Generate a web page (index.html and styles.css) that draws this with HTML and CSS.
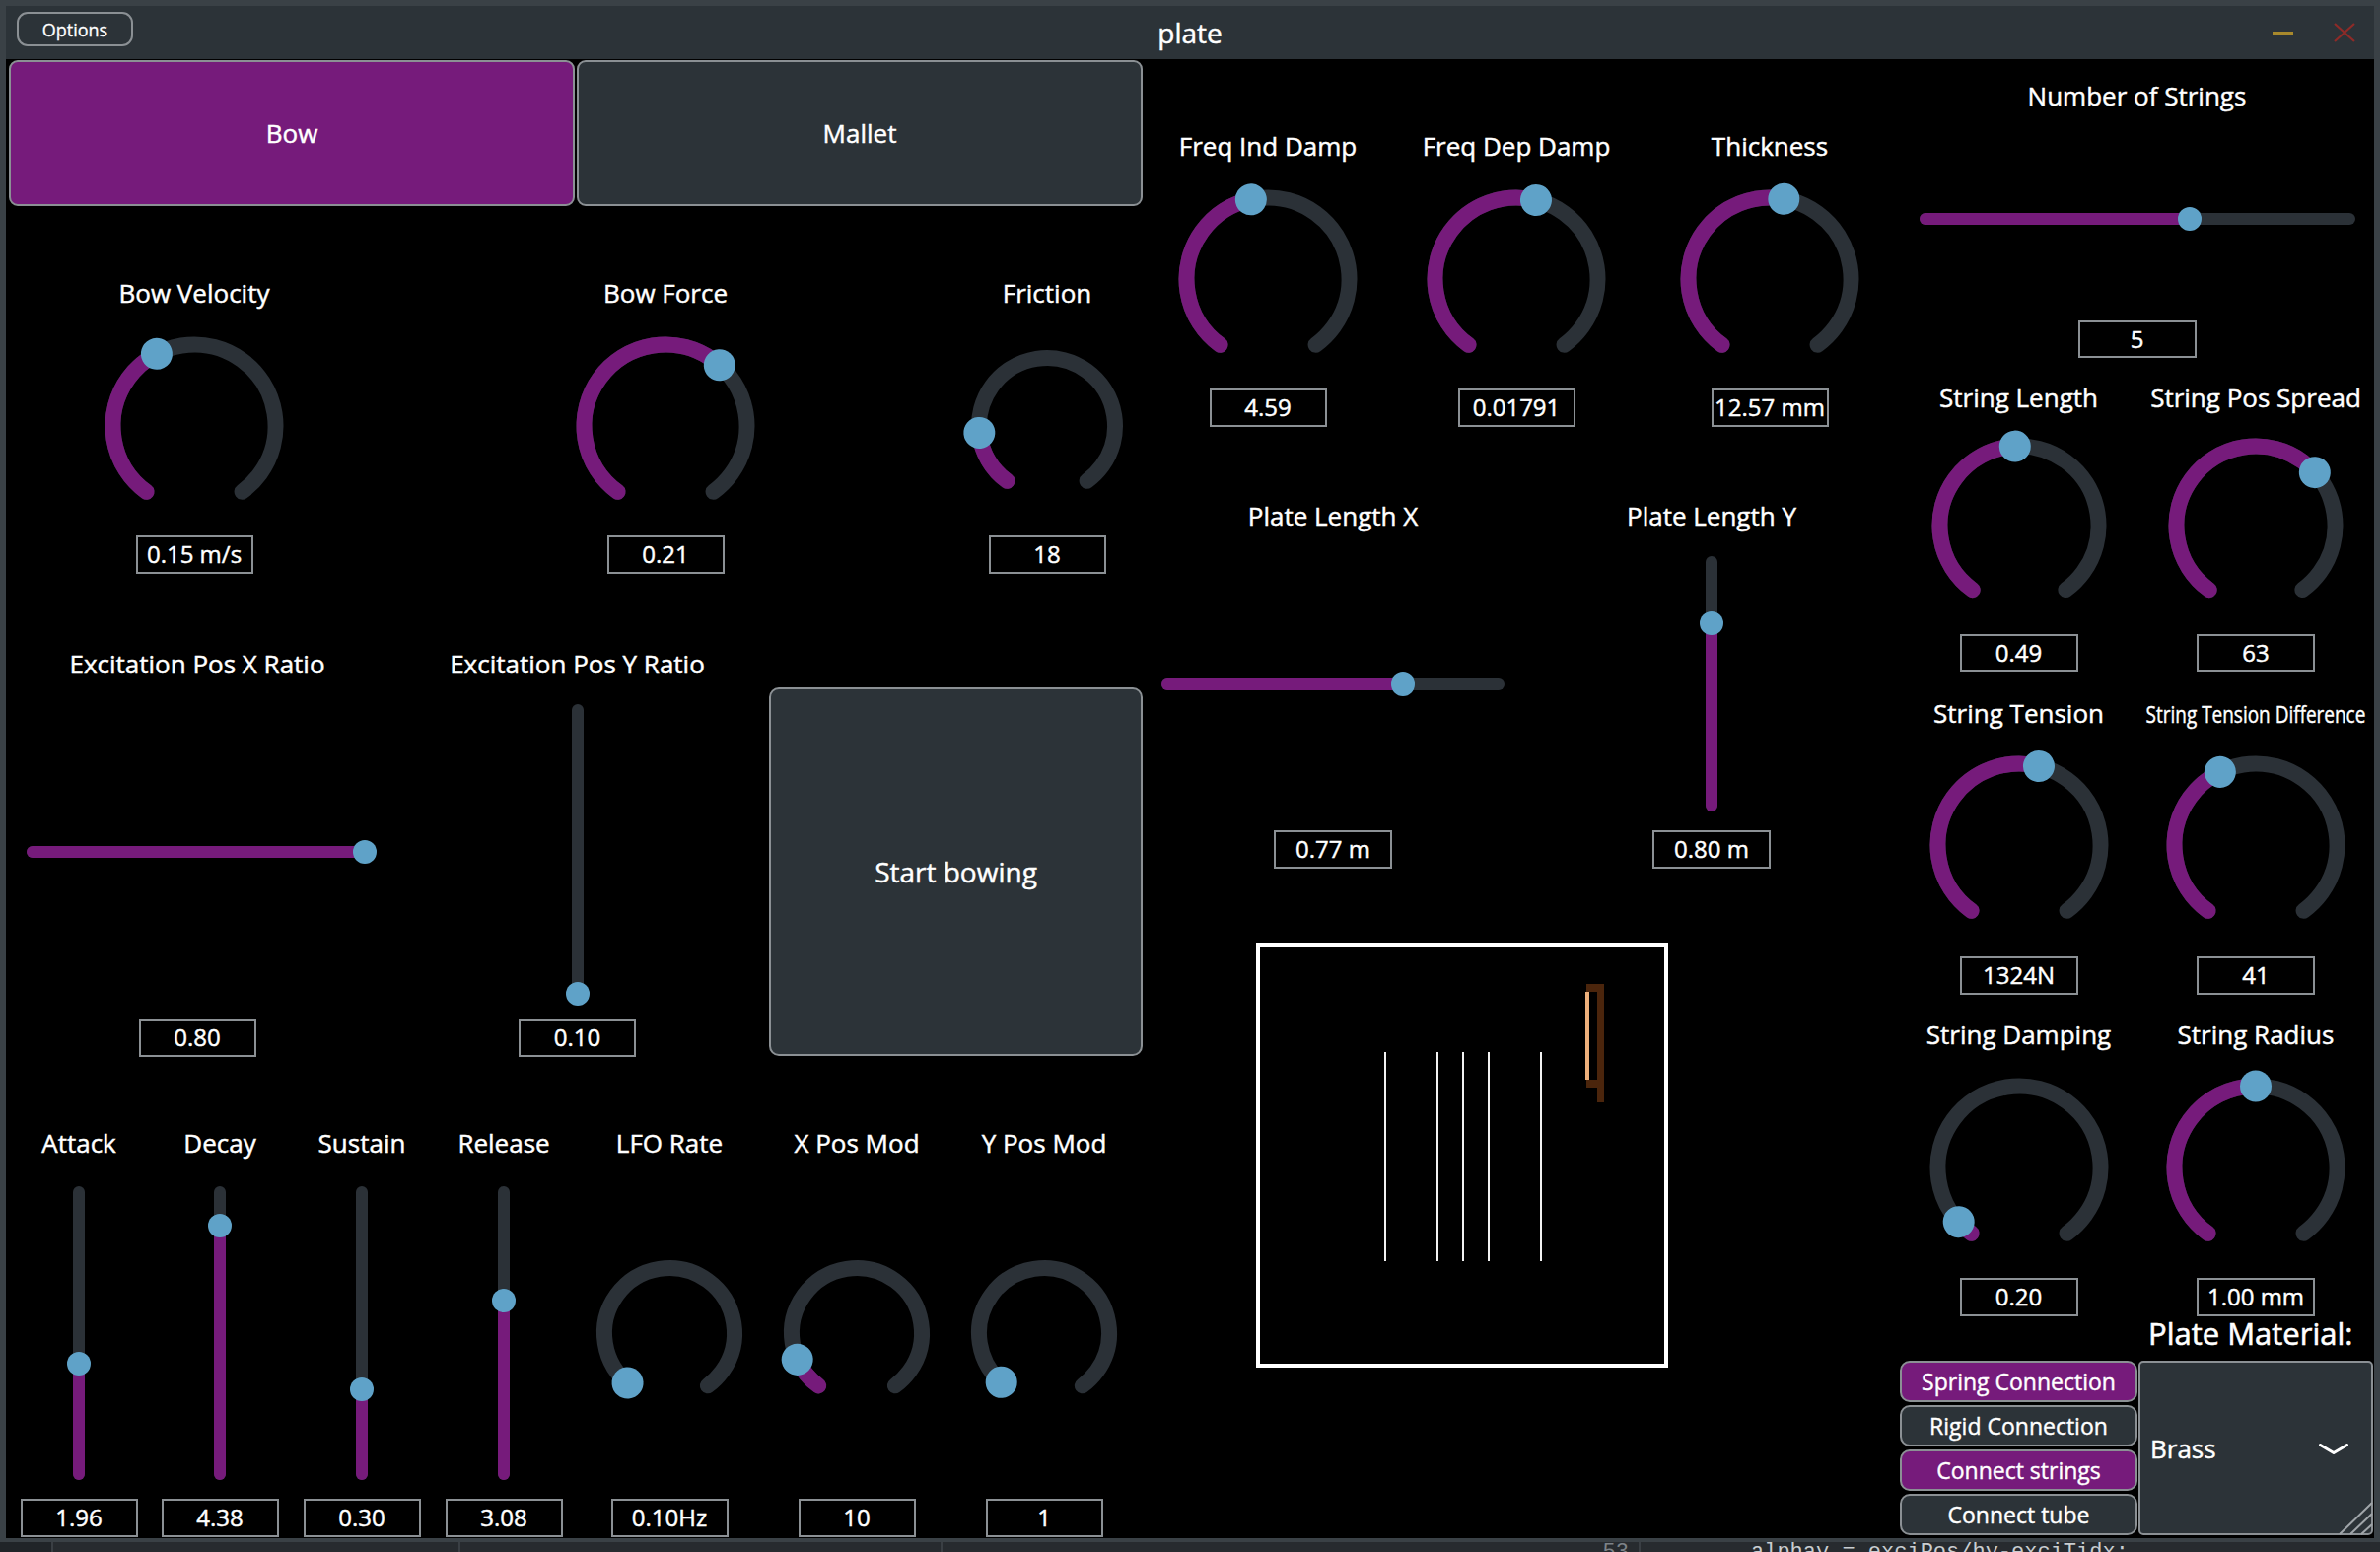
FILE: index.html
```html
<!DOCTYPE html>
<html>
<head>
<meta charset="utf-8">
<title>plate</title>
<link rel="stylesheet" href="styles.css">
</head>
<body>
<div class="window">
  <header class="titlebar">
    <div class="tb-left"><button class="opt-btn">Options</button></div>
    <div class="title">plate</div>
    <div class="tb-right">
      <span class="min-btn"></span>
      <svg class="close-btn" width="22" height="20" viewBox="0 0 22 20"><path d="M1 1 L21 19 M21 1 L1 19"/></svg>
    </div>
  </header>

  <main class="content">
    <!-- LEFT COLUMN -->
    <section class="col-left">
      <div class="tabs">
        <button class="tab on">Bow</button>
        <button class="tab">Mallet</button>
      </div>

      <div class="row row-b">
        <div class="cell c-bowvel">
          <div class="lbl">Bow Velocity</div>
          <div class="knob-area">
            <svg class="knob" width="184" height="184" viewBox="-92 -92 184 184">
              <circle class="trk" r="82.5" pathLength="360" stroke-dasharray="288 72" transform="rotate(126)"/>
              <circle class="val" r="82.5" pathLength="360" stroke-dasharray="116.5 360" transform="rotate(126)"/>
              <circle class="thumb" cy="-82.5" r="16" transform="rotate(-27.5)"/>
            </svg>
          </div>
          <div class="vbox">0.15 m/s</div>
        </div>
        <div class="cell c-bowforce">
          <div class="lbl">Bow Force</div>
          <div class="knob-area">
            <svg class="knob" width="184" height="184" viewBox="-92 -92 184 184">
              <circle class="trk" r="82.5" pathLength="360" stroke-dasharray="288 72" transform="rotate(126)"/>
              <circle class="val" r="82.5" pathLength="360" stroke-dasharray="185.6 360" transform="rotate(126)"/>
              <circle class="thumb" cy="-82.5" r="16" transform="rotate(41.6)"/>
            </svg>
          </div>
          <div class="vbox">0.21</div>
        </div>
        <div class="cell c-friction">
          <div class="lbl">Friction</div>
          <div class="knob-area">
            <svg class="knob" width="154" height="154" viewBox="-77 -77 154 154">
              <circle class="trk" r="69" pathLength="360" stroke-dasharray="288 72" transform="rotate(126)"/>
              <circle class="val" r="69" pathLength="360" stroke-dasharray="48.2 360" transform="rotate(126)"/>
              <circle class="thumb" cy="-69" r="16" transform="rotate(-95.8)"/>
            </svg>
          </div>
          <div class="vbox">18</div>
        </div>
      </div>

      <div class="row row-c">
        <div class="cell c-excx">
          <div class="lbl">Excitation Pos X Ratio</div>
          <div class="ctrl-c">
            <div class="hslider hs-excx"><div class="fill" style="width:96.9%"></div><div class="hthumb" style="left:96.9%"></div></div>
          </div>
          <div class="vbox">0.80</div>
        </div>
        <div class="cell c-excy">
          <div class="lbl">Excitation Pos Y Ratio</div>
          <div class="ctrl-c">
            <div class="vslider vs-excy"><div class="vfill" style="height:0.7%"></div><div class="vthumb" style="bottom:0.7%"></div></div>
          </div>
          <div class="vbox">0.10</div>
        </div>
        <button class="start-btn">Start bowing</button>
      </div>

      <div class="row row-d">
        <div class="cell c-adsr">
          <div class="lbl">Attack</div>
          <div class="ctrl-d">
            <div class="vslider vs-adsr"><div class="vfill" style="height:39.6%"></div><div class="vthumb" style="bottom:39.6%"></div></div>
          </div>
          <div class="vbox">1.96</div>
        </div>
        <div class="cell c-adsr2">
          <div class="lbl">Decay</div>
          <div class="ctrl-d">
            <div class="vslider vs-adsr"><div class="vfill" style="height:86.6%"></div><div class="vthumb" style="bottom:86.6%"></div></div>
          </div>
          <div class="vbox">4.38</div>
        </div>
        <div class="cell c-adsr2">
          <div class="lbl">Sustain</div>
          <div class="ctrl-d">
            <div class="vslider vs-adsr"><div class="vfill" style="height:30.9%"></div><div class="vthumb" style="bottom:30.9%"></div></div>
          </div>
          <div class="vbox">0.30</div>
        </div>
        <div class="cell c-adsr2">
          <div class="lbl">Release</div>
          <div class="ctrl-d">
            <div class="vslider vs-adsr"><div class="vfill" style="height:61.1%"></div><div class="vthumb" style="bottom:61.1%"></div></div>
          </div>
          <div class="vbox">3.08</div>
        </div>
        <div class="cell c-lfo">
          <div class="lbl">LFO Rate</div>
          <div class="ctrl-d knob-d">
            <svg class="knob" width="150" height="150" viewBox="-75 -75 150 150">
              <circle class="trk" r="66" pathLength="360" stroke-dasharray="288 72" transform="rotate(126)"/>
              <circle class="val" r="66" pathLength="360" stroke-dasharray="4 360" transform="rotate(126)"/>
              <circle class="thumb" cy="-66" r="16" transform="rotate(-140)"/>
            </svg>
          </div>
          <div class="vbox">0.10Hz</div>
        </div>
        <div class="cell c-xpos">
          <div class="lbl">X Pos Mod</div>
          <div class="ctrl-d knob-d">
            <svg class="knob" width="150" height="150" viewBox="-75 -75 150 150">
              <circle class="trk" r="66" pathLength="360" stroke-dasharray="288 72" transform="rotate(126)"/>
              <circle class="val" r="66" pathLength="360" stroke-dasharray="30 360" transform="rotate(126)"/>
              <circle class="thumb" cy="-66" r="16" transform="rotate(-114)"/>
            </svg>
          </div>
          <div class="vbox">10</div>
        </div>
        <div class="cell c-lfo">
          <div class="lbl">Y Pos Mod</div>
          <div class="ctrl-d knob-d">
            <svg class="knob" width="150" height="150" viewBox="-75 -75 150 150">
              <circle class="trk" r="66" pathLength="360" stroke-dasharray="288 72" transform="rotate(126)"/>
              <circle class="val" r="66" pathLength="360" stroke-dasharray="5 360" transform="rotate(126)"/>
              <circle class="thumb" cy="-66" r="16" transform="rotate(-139)"/>
            </svg>
          </div>
          <div class="vbox">1</div>
        </div>
      </div>
    </section>

    <!-- MIDDLE COLUMN -->
    <section class="col-mid">
      <div class="row row-m1">
        <div class="cell c-fid">
          <div class="lbl">Freq Ind Damp</div>
          <div class="knob-area">
            <svg class="knob" width="184" height="184" viewBox="-92 -92 184 184">
              <circle class="trk" r="82.5" pathLength="360" stroke-dasharray="288 72" transform="rotate(126)"/>
              <circle class="val" r="82.5" pathLength="360" stroke-dasharray="132 360" transform="rotate(126)"/>
              <circle class="thumb" cy="-82.5" r="16" transform="rotate(-12)"/>
            </svg>
          </div>
          <div class="vbox">4.59</div>
        </div>
        <div class="cell c-fdd">
          <div class="lbl">Freq Dep Damp</div>
          <div class="knob-area">
            <svg class="knob" width="184" height="184" viewBox="-92 -92 184 184">
              <circle class="trk" r="82.5" pathLength="360" stroke-dasharray="288 72" transform="rotate(126)"/>
              <circle class="val" r="82.5" pathLength="360" stroke-dasharray="158 360" transform="rotate(126)"/>
              <circle class="thumb" cy="-82.5" r="16" transform="rotate(14)"/>
            </svg>
          </div>
          <div class="vbox">0.01791</div>
        </div>
        <div class="cell c-thick">
          <div class="lbl">Thickness</div>
          <div class="knob-area">
            <svg class="knob" width="184" height="184" viewBox="-92 -92 184 184">
              <circle class="trk" r="82.5" pathLength="360" stroke-dasharray="288 72" transform="rotate(126)"/>
              <circle class="val" r="82.5" pathLength="360" stroke-dasharray="154 360" transform="rotate(126)"/>
              <circle class="thumb" cy="-82.5" r="16" transform="rotate(10)"/>
            </svg>
          </div>
          <div class="vbox">12.57 mm</div>
        </div>
      </div>

      <div class="row row-m2">
        <div class="cell c-plx">
          <div class="lbl">Plate Length X</div>
          <div class="ctrl-m2 ctrl-m2h">
            <div class="hslider hs-plx"><div class="fill" style="width:70.4%"></div><div class="hthumb" style="left:70.4%"></div></div>
          </div>
          <div class="vbox vbox-w">0.77 m</div>
        </div>
        <div class="cell c-ply">
          <div class="lbl">Plate Length Y</div>
          <div class="ctrl-m2 ctrl-m2v">
            <div class="vslider vs-ply"><div class="vfill" style="height:73.7%"></div><div class="vthumb" style="bottom:73.7%"></div></div>
          </div>
          <div class="vbox vbox-w">0.80 m</div>
        </div>
      </div>

      <div class="plate">
        <span class="str s1"></span>
        <span class="str s2"></span>
        <span class="str s3"></span>
        <span class="str s4"></span>
        <span class="str s5"></span>
        <span class="bow-stick"></span>
        <span class="bow-top"></span>
        <span class="bow-bot"></span>
        <span class="bow-hair"></span>
      </div>
    </section>

    <!-- RIGHT COLUMN -->
    <section class="col-right">
      <div class="cell c-nstr">
        <div class="lbl">Number of Strings</div>
        <div class="ctrl-n">
          <div class="hslider hs-nstr"><div class="fill" style="width:62.2%"></div><div class="hthumb" style="left:62.2%"></div></div>
        </div>
        <div class="vbox vbox-r vbox-n">5</div>
      </div>

      <div class="row row-r1">
        <div class="cell c-r">
          <div class="lbl">String Length</div>
          <div class="knob-area">
            <svg class="knob" width="178" height="178" viewBox="-89 -89 178 178">
              <circle class="trk" r="80.5" pathLength="360" stroke-dasharray="288 72" transform="rotate(126)"/>
              <circle class="val" r="80.5" pathLength="360" stroke-dasharray="141 360" transform="rotate(126)"/>
              <circle class="thumb" cy="-80.5" r="16" transform="rotate(-3)"/>
            </svg>
          </div>
          <div class="vbox vbox-r">0.49</div>
        </div>
        <div class="cell c-r2">
          <div class="lbl">String Pos Spread</div>
          <div class="knob-area">
            <svg class="knob" width="178" height="178" viewBox="-89 -89 178 178">
              <circle class="trk" r="80.5" pathLength="360" stroke-dasharray="288 72" transform="rotate(126)"/>
              <circle class="val" r="80.5" pathLength="360" stroke-dasharray="192 360" transform="rotate(126)"/>
              <circle class="thumb" cy="-80.5" r="16" transform="rotate(48)"/>
            </svg>
          </div>
          <div class="vbox vbox-r">63</div>
        </div>
      </div>

      <div class="row row-r2">
        <div class="cell c-r">
          <div class="lbl">String Tension</div>
          <div class="knob-area">
            <svg class="knob" width="184" height="184" viewBox="-92 -92 184 184">
              <circle class="trk" r="82.5" pathLength="360" stroke-dasharray="288 72" transform="rotate(126)"/>
              <circle class="val" r="82.5" pathLength="360" stroke-dasharray="158 360" transform="rotate(126)"/>
              <circle class="thumb" cy="-82.5" r="16" transform="rotate(14)"/>
            </svg>
          </div>
          <div class="vbox vbox-r">1324N</div>
        </div>
        <div class="cell c-r2">
          <div class="lbl"><span class="squeeze">String Tension Difference</span></div>
          <div class="knob-area">
            <svg class="knob" width="184" height="184" viewBox="-92 -92 184 184">
              <circle class="trk" r="82.5" pathLength="360" stroke-dasharray="288 72" transform="rotate(126)"/>
              <circle class="val" r="82.5" pathLength="360" stroke-dasharray="118 360" transform="rotate(126)"/>
              <circle class="thumb" cy="-82.5" r="16" transform="rotate(-26)"/>
            </svg>
          </div>
          <div class="vbox vbox-r">41</div>
        </div>
      </div>

      <div class="row row-r3">
        <div class="cell c-r">
          <div class="lbl">String Damping</div>
          <div class="knob-area">
            <svg class="knob" width="184" height="184" viewBox="-92 -92 184 184">
              <circle class="trk" r="82.5" pathLength="360" stroke-dasharray="288 72" transform="rotate(126)"/>
              <circle class="val" r="82.5" pathLength="360" stroke-dasharray="12 360" transform="rotate(126)"/>
              <circle class="thumb" cy="-82.5" r="16" transform="rotate(-132)"/>
            </svg>
          </div>
          <div class="vbox vbox-r">0.20</div>
        </div>
        <div class="cell c-r2">
          <div class="lbl">String Radius</div>
          <div class="knob-area">
            <svg class="knob" width="184" height="184" viewBox="-92 -92 184 184">
              <circle class="trk" r="82.5" pathLength="360" stroke-dasharray="288 72" transform="rotate(126)"/>
              <circle class="val" r="82.5" pathLength="360" stroke-dasharray="144 360" transform="rotate(126)"/>
              <circle class="thumb" cy="-82.5" r="16" transform="rotate(0)"/>
            </svg>
          </div>
          <div class="vbox vbox-r">1.00 mm</div>
        </div>
      </div>

      <div class="mat-lbl">Plate Material:</div>

      <div class="bottom-r">
        <div class="toggles">
          <button class="tgl on">Spring Connection</button>
          <button class="tgl">Rigid Connection</button>
          <button class="tgl on">Connect strings</button>
          <button class="tgl">Connect tube</button>
        </div>
        <div class="combo">
          <span class="combo-text">Brass</span>
          <svg class="chev" width="30" height="12" viewBox="0 0 30 12"><path d="M1.5 1.5 L15 9.5 L28.5 1.5"/></svg>
          <svg class="resizer" width="36" height="34" viewBox="0 0 36 34"><path d="M2 33 L35 1 M13 33 L35 12 M24 33 L35 23"/></svg>
        </div>
      </div>
    </section>
  </main>
</div>
<div class="under">
  <span class="seg sg1"></span>
  <span class="seg sg2"></span>
  <span class="seg sg3"></span>
  <span class="seg sg4"><span class="ln">53</span></span>
  <span class="seg sg5"><span class="code">alphay = exciPos/hy-exciTidx;</span></span>
</div>
</body>
</html>
```

FILE: styles.css
```css
* { box-sizing: border-box; }
html, body { margin: 0; padding: 0; }
body {
  width: 2414px;
  height: 1574px;
  overflow: hidden;
  background: #24282c;
  color: #fff;
  font-family: "Open Sans", "DejaVu Sans", sans-serif;
}
button { font-family: "Open Sans", "DejaVu Sans", sans-serif; color: #fff; padding: 0; cursor: default; }

.window {
  width: 2414px;
  height: 1564px;
  border: 6px solid #3a4146;
  border-bottom-width: 4px;
  display: flex;
  flex-direction: column;
  background: #000;
  -webkit-text-stroke: 0.45px #fff;
}

/* ---------- title bar ---------- */
.titlebar {
  height: 54px;
  flex: none;
  background: #2c3338;
  display: grid;
  grid-template-columns: 1fr auto 1fr;
  align-items: center;
}
.tb-left { align-self: start; padding: 6px 0 0 11px; }
.opt-btn {
  width: 118px;
  height: 35px;
  border: 2px solid #8b9094;
  border-radius: 11px;
  background: #2c3338;
  font-size: 18px;
  line-height: 1;
  -webkit-text-stroke: 0.3px #fff;
}
.title { font-size: 28px; line-height: 36px; color: #fff; }
.tb-right { display: flex; justify-content: flex-end; align-items: center; padding-right: 19px; gap: 41px; }
.min-btn { width: 21px; height: 4px; background: #a8892c; margin-top: 2px; }
.close-btn path { stroke: #8e2b28; stroke-width: 2.2; fill: none; }

/* ---------- layout ---------- */
.content { flex: 1; display: flex; background: #000; }
.col-left { width: 1150px; margin-left: 3px; display: flex; flex-direction: column; flex: none; }
.col-mid { width: 768px; display: flex; flex-direction: column; flex: none; }
.col-right { width: 481px; display: flex; flex-direction: column; flex: none; }

.row { display: flex; }
.cell { display: flex; flex-direction: column; align-items: center; flex: none; }
.lbl {
  height: 36px;
  line-height: 36px;
  font-size: 26px;
  white-space: nowrap;
  color: #fff;
}
.squeeze { display: inline-block; font-size: 24px; transform: scaleX(0.79); }
.knob-area {
  height: 184px;
  margin-top: 25px;
  display: flex;
  align-items: center;
  justify-content: center;
}
.vbox {
  width: 119px;
  height: 39px;
  border: 2px solid #8b9094;
  background: #000;
  color: #fff;
  font-size: 24px;
  line-height: 34px;
  text-align: center;
  white-space: nowrap;
}
.vbox-w { width: 120px; }
.vbox-r { width: 120px; }

/* knobs */
.knob { overflow: visible; display: block; }
.knob .trk { fill: none; stroke: #2b3137; stroke-width: 16; stroke-linecap: round; }
.knob .val { fill: none; stroke: #761b7b; stroke-width: 16; stroke-linecap: round; }
.knob .thumb { fill: #5fa2c8; }

/* linear sliders */
.hslider { position: relative; height: 12px; border-radius: 6px; background: #2b3137; flex: none; }
.hslider .fill { position: absolute; left: 0; top: 0; bottom: 0; border-radius: 6px; background: #761b7b; }
.hthumb {
  position: absolute;
  top: 50%;
  width: 24px;
  height: 24px;
  margin: -12px 0 0 -12px;
  border-radius: 50%;
  background: #5fa2c8;
}
.vslider { position: relative; width: 12px; border-radius: 6px; background: #2b3137; flex: none; }
.vslider .vfill { position: absolute; left: 0; right: 0; bottom: 0; border-radius: 6px; background: #761b7b; }
.vthumb {
  position: absolute;
  left: 50%;
  width: 24px;
  height: 24px;
  margin: 0 0 -12px -12px;
  border-radius: 50%;
  background: #5fa2c8;
}

/* ---------- left column ---------- */
.tabs { display: flex; gap: 2px; height: 148px; margin-top: 1px; flex: none; }
.tab {
  flex: 1;
  border: 2px solid #8b9094;
  border-radius: 9px;
  background: #2c3338;
  font-size: 26px;
  -webkit-text-stroke: 0.45px #fff;
}
.tab.on { background: #761b7b; }

.row-b { margin-top: 70px; }
.row-b .vbox { margin-top: 19px; }
.c-bowvel { width: 376px; }
.c-bowforce { width: 580px; }
.c-friction { width: 194px; }

.row-c { margin-top: 73px; }
.c-excx { width: 382px; }
.c-excy { width: 389px; }
.ctrl-c { height: 342px; display: flex; align-items: center; justify-content: center; }
.hs-excx { width: 354px; margin-left: 8px; margin-top: 3px; }
.vs-excy { height: 296px; }
.start-btn {
  margin-top: 42px;
  width: 379px;
  height: 374px;
  border: 2px solid #8b9094;
  border-radius: 10px;
  background: #2c3338;
  font-size: 28px;
  -webkit-text-stroke: 0.45px #fff;
}

.row-d { margin-top: 69px; }
.c-adsr { width: 142px; }
.c-adsr2 { width: 144px; }
.c-lfo { width: 192px; }
.c-xpos { width: 188px; }
.ctrl-d { height: 343px; display: flex; justify-content: center; align-items: flex-start; padding-top: 26px; }
.ctrl-d.knob-d { padding-top: 100px; }
.vs-adsr { height: 298px; }

/* ---------- middle column ---------- */
.row-m1 { margin-top: 70px; }
.row-m1 .vbox { margin-top: 19px; }
.c-fid { width: 254px; }
.c-fdd { width: 250px; }
.c-thick { width: 264px; }

.row-m2 { margin-top: 72px; }
.c-plx { width: 386px; }
.c-ply { width: 382px; }
.ctrl-m2 { height: 301px; display: flex; justify-content: center; align-items: flex-start; }
.ctrl-m2h { padding-top: 147px; }
.ctrl-m2v { padding-top: 23px; }
.hs-plx { width: 348px; }
.vs-ply { height: 259px; }

.plate {
  position: relative;
  margin-top: 75px;
  margin-left: 115px;
  width: 418px;
  height: 431px;
  border: 4px solid #fff;
  background: #000;
  flex: none;
}
.str { position: absolute; top: 107px; width: 2px; height: 212px; background: #f2f2f2; }
.s1 { left: 126px; }
.s2 { left: 179px; }
.s3 { left: 205px; }
.s4 { left: 231px; }
.s5 { left: 284px; }
.bow-stick { position: absolute; left: 342px; top: 38px; width: 7px; height: 120px; background: #4b250c; }
.bow-top { position: absolute; left: 331px; top: 38px; width: 18px; height: 8px; background: #4b250c; }
.bow-bot { position: absolute; left: 331px; top: 135px; width: 11px; height: 8px; background: #4b250c; }
.bow-hair { position: absolute; left: 330px; top: 46px; width: 4px; height: 89px; background: #eeb07c; }

/* ---------- right column ---------- */
.c-nstr { width: 481px; margin-top: 19px; }
.ctrl-n { height: 210px; padding-top: 101px; display: flex; justify-content: center; align-items: flex-start; }
.hs-nstr { width: 442px; }
.vbox-n { height: 38px; }

.c-r { width: 241px; }
.c-r2 { width: 240px; }
.row-r1 { margin-top: 22px; }
.row-r1 .knob-area { margin-top: 20px; }
.row-r1 .vbox { margin-top: 18px; }
.row-r2 { margin-top: 23px; }
.row-r2 .knob-area { margin-top: 24px; }
.row-r2 .vbox { margin-top: 21px; }
.row-r3 { margin-top: 22px; }
.row-r3 .knob-area { margin-top: 25px; }
.row-r3 .vbox { margin-top: 20px; }

.mat-lbl {
  height: 34px;
  line-height: 34px;
  font-size: 31px;
  padding-left: 252px;
  white-space: nowrap;
  -webkit-text-stroke: 0.6px #fff;
}

.bottom-r { display: flex; gap: 1px; margin-top: 11px; height: 177px; }
.toggles { width: 241px; display: flex; flex-direction: column; gap: 3px; flex: none; }
.tgl {
  height: 42px;
  border: 2px solid #8b9094;
  border-radius: 10px;
  background: #2c3338;
  font-size: 23px;
  line-height: 1;
  -webkit-text-stroke: 0.4px #fff;
}
.tgl.on { background: #761b7b; }
.combo {
  position: relative;
  width: 238px;
  height: 177px;
  border: 2px solid #8b9094;
  border-radius: 5px;
  background: #2c3338;
  display: flex;
  align-items: center;
  justify-content: space-between;
  padding: 0 23px 0 10px;
}
.combo-text { font-size: 26px; }
.chev { display: block; margin-top: 2px; }
.chev path { fill: none; stroke: #fff; stroke-width: 3; stroke-linecap: round; stroke-linejoin: round; }
.resizer { position: absolute; right: -2px; bottom: -2px; }
.resizer path { stroke: #a0a5a9; stroke-width: 2; fill: none; }

/* ---------- window underneath ---------- */
.under { height: 10px; display: flex; background: #272b2f; overflow: hidden; }
.seg { height: 10px; border-left: 2px solid #3a3f44; flex: none; overflow: hidden; }
.sg1 { width: 52px; border-left: none; background: #202428; }
.sg2 { width: 413px; }
.sg3 { width: 489px; }
.sg4 { width: 708px; text-align: right; padding-right: 10px; }
.sg5 { flex: 1; padding-left: 112px; }
.ln, .code {
  display: block;
  font-family: "Liberation Mono", monospace;
  font-size: 22px;
  line-height: 22px;
  color: #c9cdd0;
  white-space: nowrap;
}
.ln { color: #7d8388; }
```
